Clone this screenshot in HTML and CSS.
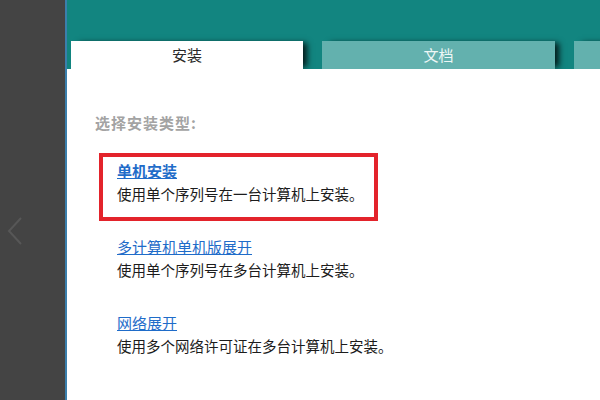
FILE: index.html
```html
<!DOCTYPE html>
<html lang="zh-CN">
<head>
<meta charset="utf-8">
<title>安装</title>
<link rel="stylesheet" href="styles.css">
</head>
<body>
<div class="app">
  <aside class="side">
    <svg class="chev" width="16" height="28" viewBox="0 0 16 28" aria-hidden="true">
      <polyline points="14,1 2,14 14,27" fill="none" stroke="#575757" stroke-width="2"/>
    </svg>
  </aside>
  <main class="main">
    <header class="header">
      <div class="tab tab-active">安装</div>
      <div class="tab">文档</div>
      <div class="tab"></div>
    </header>
    <section class="content">
      <div class="heading">选择安装类型:</div>
      <div class="option option-marked">
        <a class="link link-bold" href="#">单机安装</a>
        <div class="desc">使用单个序列号在一台计算机上安装。</div>
      </div>
      <div class="option">
        <a class="link" href="#">多计算机单机版展开</a>
        <div class="desc">使用单个序列号在多台计算机上安装。</div>
      </div>
      <div class="option">
        <a class="link" href="#">网络展开</a>
        <div class="desc">使用多个网络许可证在多台计算机上安装。</div>
      </div>
    </section>
  </main>
</div>
</body>
</html>
```

FILE: styles.css
```css
html, body {
  margin: 0;
  padding: 0;
}
body {
  width: 600px;
  height: 400px;
  overflow: hidden;
  font-family: "Noto Sans CJK SC", "Noto Sans", sans-serif;
  background: #ffffff;
}
.app {
  display: flex;
  width: 600px;
  height: 400px;
}
.side {
  width: 65px;
  flex: none;
  background: #444444;
  padding: 217px 0 0 7px;
  box-sizing: border-box;
}
.chev {
  display: block;
}
.main {
  flex: 1;
  min-width: 0;
  border-left: 2px solid #3b7fac;
  display: flex;
  flex-direction: column;
  background: #ffffff;
}
.header {
  height: 69px;
  box-sizing: border-box;
  background: #128580;
  padding: 41px 0 0 4px;
  display: flex;
  gap: 19px;
  overflow: hidden;
  flex: none;
}
.tab {
  flex: none;
  width: 232px;
  height: 28px;
  background: #63b1ae;
  color: #eef7f6;
  font-size: 15px;
  line-height: 28px;
  text-align: center;
  box-shadow: 6px 0 6px -2px rgba(0, 0, 0, 0.8);
}
.tab + .tab {
  width: 233px;
}
.tab-active {
  background: #ffffff;
  color: #2a2a2a;
}
.content {
  flex: 1;
  padding: 42px 0 0 28px;
}
.heading {
  color: #a3a3a3;
  font-weight: bold;
  font-size: 15px;
  letter-spacing: 1px;
  line-height: 23px;
  margin-bottom: 19px;
}
.option {
  width: 279px;
  box-sizing: border-box;
  margin-left: 4px;
  border: 4px solid transparent;
  padding: 2px 0 12px 14px;
  margin-bottom: 8px;
}
.option-marked {
  border-color: #e3232b;
}
.link {
  display: block;
  width: max-content;
  color: #1f6cc9;
  font-size: 15px;
  line-height: 23px;
  text-decoration: underline;
}
.link-bold {
  font-weight: bold;
}
.desc {
  color: #1c1c1c;
  font-size: 14.5px;
  line-height: 23px;
  white-space: nowrap;
}
```
